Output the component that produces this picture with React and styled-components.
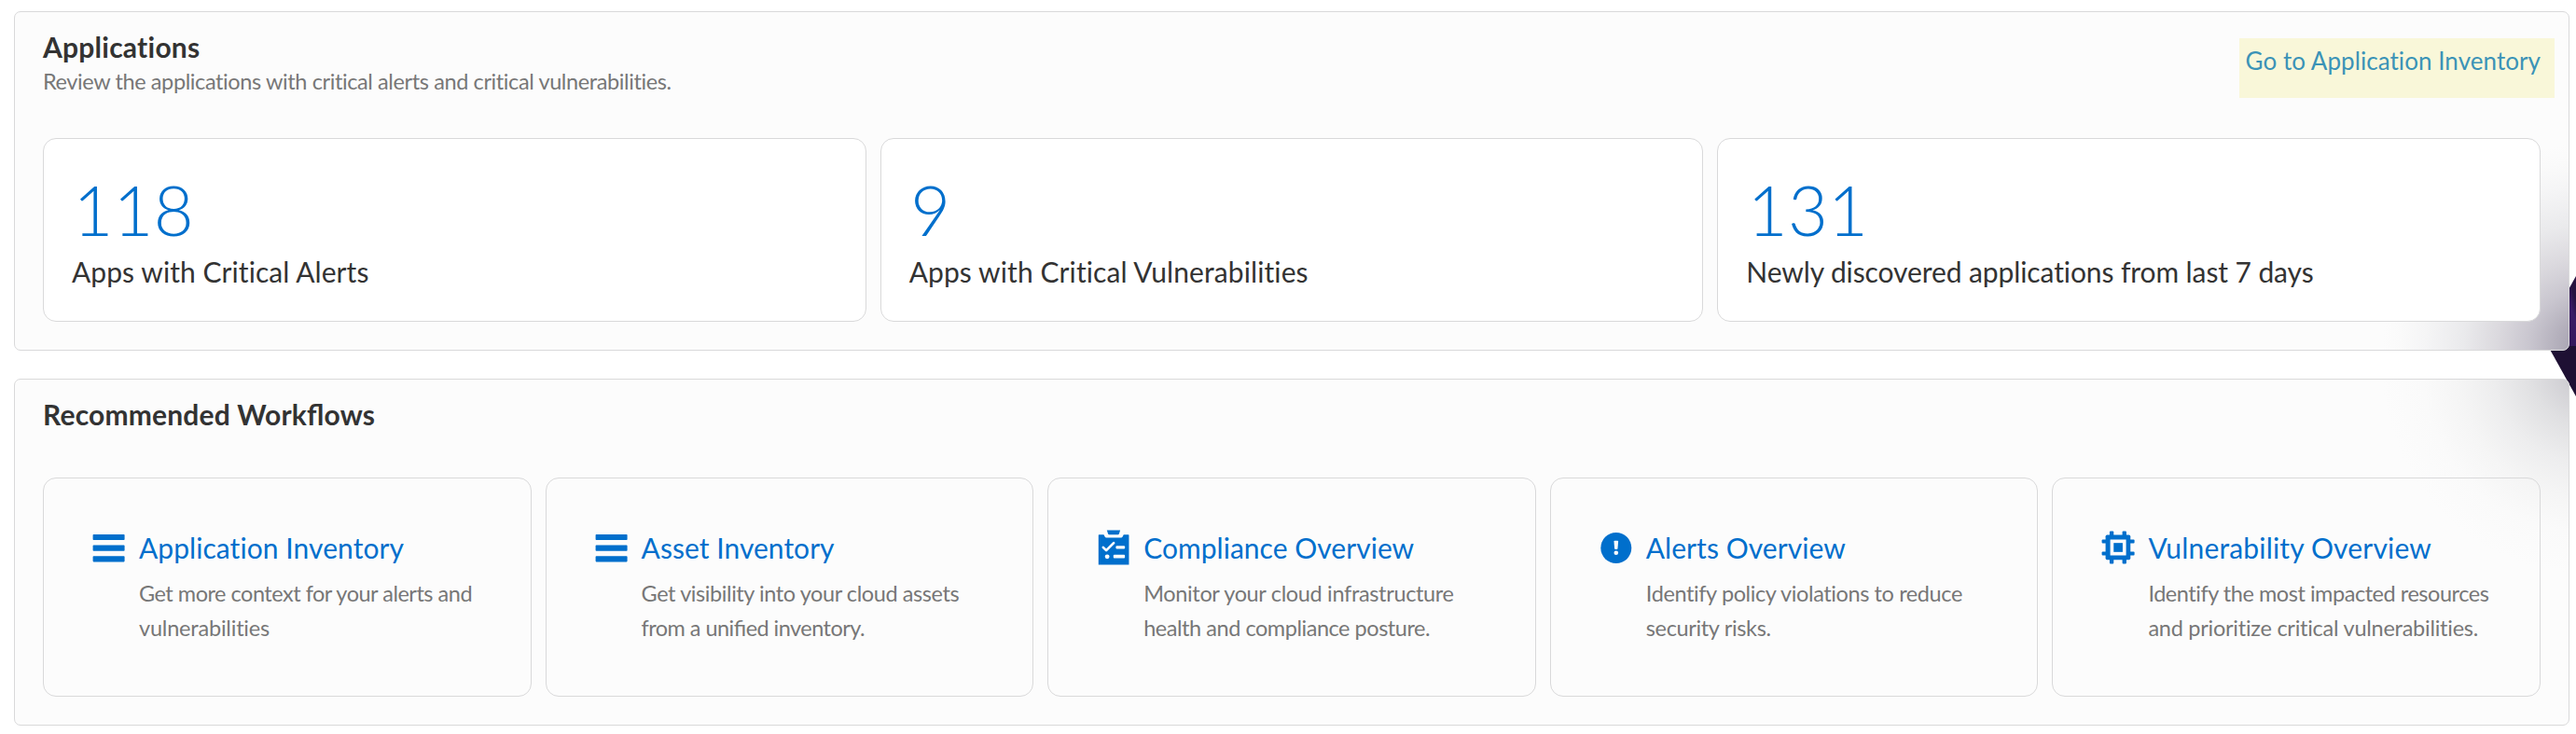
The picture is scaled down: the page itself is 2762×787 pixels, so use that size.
import React from "react";
import styled, { createGlobalStyle } from "styled-components";

const BLUE = "#006fcc";

const GlobalStyle = createGlobalStyle`
  * { box-sizing: border-box; }
  body {
    margin: 0;
    background: #fff;
    color: #333;
    font-family: Lato, "Liberation Sans", sans-serif;
    font-variant-ligatures: none;
  }
`;

const Page = styled.main`
  position: relative;
  display: flex;
  flex-direction: column;
  gap: 30px;
  height: 787px;
  padding: 12px 7px 9px 15px;
  overflow: hidden;
`;

const Gem = styled.svg`
  position: absolute;
  top: 286px;
  right: 0;
  width: 40px;
  height: 150px;
`;

const Panel = styled.section`
  position: relative;
  display: flex;
  flex-direction: column;
  padding: 19px 30px 30px;
  border: 1px solid #d9d9da;
  border-radius: 7px;
  background: ${(p) => p.$glow}, #fcfcfc;
`;

const Header = styled.header`
  display: flex;
  justify-content: space-between;
  align-items: flex-start;
  height: ${(p) => p.$height}px;
`;

const Heading = styled.h2`
  margin: 0;
  font-size: 30px;
  line-height: 36px;
  font-weight: 700;
  letter-spacing: ${(p) => p.$track}px;
  font-feature-settings: "liga" ${(p) => (p.$ligatures ? 1 : 0)};
`;

const Subtitle = styled.p`
  margin: 5px 0 0;
  font-size: 23.5px;
  line-height: 28px;
  letter-spacing: -0.39px;
  color: #777;
`;

const HighlightLink = styled.a`
  height: 64px;
  margin: 9px -15px 0 0;
  padding: 8px 15px 0 6px;
  background: #f9f7d9;
  color: #3b93b7;
  font-size: 26px;
  line-height: 32px;
  letter-spacing: 0.055px;
  white-space: nowrap;
  text-decoration: none;
`;

const Cards = styled.div`
  display: grid;
  grid-template-columns: repeat(${(p) => p.$columns}, minmax(0, 1fr));
  gap: 15px;
`;

const Card = styled.article`
  border: 1px solid #d9d9da;
  border-radius: 14px;
`;

const StatCard = styled(Card)`
  padding: 32px 30px 35px;
  background: #fff;
`;

const StatValue = styled.div`
  padding-left: 1.5px;
  color: ${BLUE};
  font-size: 74px;
  font-weight: 300;
  line-height: 88px;
  letter-spacing: 0.2px;
`;

const StatLabel = styled.div`
  margin-top: 4px;
  font-size: 30px;
  line-height: 36px;
  letter-spacing: ${(p) => p.$track}px;
`;

const WorkflowCard = styled(Card)`
  display: flex;
  gap: 14px;
  height: 235px;
  padding: 54px 30px 0 52px;
`;

const IconSvg = styled.svg`
  flex: none;
  width: 36px;
  height: 40px;
  color: ${BLUE};
`;

const WorkflowText = styled.div`
  flex: 1;
  min-width: 0;
`;

const WorkflowTitle = styled.a`
  display: block;
  color: ${BLUE};
  font-size: 30px;
  line-height: 40px;
  letter-spacing: ${(p) => p.$track}px;
  white-space: nowrap;
`;

const WorkflowCopy = styled.p`
  margin: 11px 0 0;
  color: #777;
  font-size: 23.5px;
  line-height: 37px;
`;

const CopyLine = styled.span`
  display: block;
  white-space: nowrap;
  letter-spacing: ${(p) => p.$track}px;
  font-feature-settings: "liga" ${(p) => (p.$ligatures ? 1 : 0)};
`;

const ListIcon = () => (
  <IconSvg viewBox="0 0 36 40" fill="currentColor">
    <rect x="0.6" y="6" width="34" height="6" rx="0.8" />
    <rect x="0.6" y="17.6" width="34" height="6.2" rx="0.8" />
    <rect x="0.6" y="29.3" width="34" height="6.1" rx="0.8" />
  </IconSvg>
);

const ChecklistIcon = () => (
  <IconSvg viewBox="48.6 22.5 108 120" fill="currentColor">
    <path d="M81 27h43l-4 12q-1 2-3 2H88q-2 0-3-2z" />
    <path d="M54 43q0-2 2-2h15l4 8q1 2 4 2h48q3 0 4-2l4-8h15q2 0 2 2v95H54z" />
    <path d="M69 82l10 10 24-24" fill="none" stroke="#fcfcfc" strokeWidth="8" strokeLinecap="round" strokeLinejoin="round" />
    <rect x="110" y="77" width="29" height="10" rx="3" fill="#fcfcfc" />
    <circle cx="82" cy="112" r="7.3" fill="#fcfcfc" />
    <rect x="102" y="106" width="37" height="11" rx="3" fill="#fcfcfc" />
  </IconSvg>
);

const AlertIcon = () => (
  <IconSvg viewBox="-0.6 0 36 40" fill="currentColor">
    <circle cx="17.2" cy="20.5" r="16.5" />
    <path d="M14.9 13.6q0-.8.8-.8h3q.8 0 .8.8l-.6 7.4q-.1 1-1 1h-1.4q-.9 0-1-1z" fill="#fcfcfc" />
    <circle cx="17.2" cy="25.8" r="2.3" fill="#fcfcfc" />
  </IconSvg>
);

const ChipIcon = () => (
  <IconSvg viewBox="40.2 22.5 108 120" fill="currentColor">
    <rect x="67" y="30" width="13" height="105" rx="3" />
    <rect x="108" y="30" width="13" height="105" rx="3" />
    <rect x="42" y="57" width="105" height="12" rx="3" />
    <rect x="42" y="96" width="105" height="12" rx="3" />
    <rect x="54" y="42" width="80" height="80" rx="5" />
    <rect x="69" y="57" width="51" height="51" fill="#fcfcfc" />
    <rect x="80" y="68" width="29" height="29" />
  </IconSvg>
);

const GLOW_UPPER = `radial-gradient(circle 215px at calc(100% + 16px) calc(100% - 5px),
  #aaa6b4 6%, #b5b1bd 14%, #c9c6cf 27%, #dbd9de 43%, #eaeaec 60%, #f5f5f6 79%, #fafafa 91%, #fcfcfc 100%) no-repeat`;
const GLOW_LOWER = `radial-gradient(circle 220px at calc(100% + 20px) -12px,
  #cdccd1 9%, #e0e0e2 28%, #ededee 46%, #f5f5f5 63%, #fafafa 80%, #fcfcfc 100%) no-repeat`;

const stats = [
  { value: "118", label: "Apps with Critical Alerts", track: 0.07 },
  { value: "9", label: "Apps with Critical Vulnerabilities", track: 0.1 },
  { value: "131", label: "Newly discovered applications from last 7 days", track: -0.1 },
];

const workflows = [
  {
    Icon: ListIcon,
    title: "Application Inventory",
    track: 0.06,
    lines: [
      { text: "Get more context for your alerts and", track: -0.49 },
      { text: "vulnerabilities", track: -0.2 },
    ],
  },
  {
    Icon: ListIcon,
    title: "Asset Inventory",
    track: 0.03,
    lines: [
      { text: "Get visibility into your cloud assets", track: -0.42 },
      { text: "from a unified inventory.", track: -0.54, ligatures: true },
    ],
  },
  {
    Icon: ChecklistIcon,
    title: "Compliance Overview",
    track: 0.03,
    lines: [
      { text: "Monitor your cloud infrastructure", track: -0.34 },
      { text: "health and compliance posture.", track: -0.46 },
    ],
  },
  {
    Icon: AlertIcon,
    title: "Alerts Overview",
    track: 0.05,
    lines: [
      { text: "Identify policy violations to reduce", track: -0.39 },
      { text: "security risks.", track: -0.35 },
    ],
  },
  {
    Icon: ChipIcon,
    title: "Vulnerability Overview",
    track: 0.17,
    lines: [
      { text: "Identify the most impacted resources", track: -0.46 },
      { text: "and prioritize critical vulnerabilities.", track: -0.25 },
    ],
  },
];

export default function App() {
  return (
    <>
      <GlobalStyle />
      <Page>
        <Gem viewBox="0 0 40 150">
          <defs>
            <linearGradient id="gemTop" x1="0" x2="1" y1="1" y2="0.35">
              <stop offset="0" stopColor="#241040" />
              <stop offset="0.85" stopColor="#3a1b66" />
              <stop offset="1" stopColor="#26123f" />
            </linearGradient>
          </defs>
          <path d="M40 10L4 74.5 10 85H40z" fill="url(#gemTop)" />
          <path d="M10 85L40 139V85z" fill="#1e1033" />
        </Gem>
        <Panel $glow={GLOW_UPPER}>
          <Header $height={116}>
            <div>
              <Heading $track={0.24}>Applications</Heading>
              <Subtitle>Review the applications with critical alerts and critical vulnerabilities.</Subtitle>
            </div>
            <HighlightLink>Go to Application Inventory</HighlightLink>
          </Header>
          <Cards $columns={3}>
            {stats.map((s) => (
              <StatCard key={s.label}>
                <StatValue>{s.value}</StatValue>
                <StatLabel $track={s.track}>{s.label}</StatLabel>
              </StatCard>
            ))}
          </Cards>
        </Panel>
        <Panel $glow={GLOW_LOWER}>
          <Header $height={86}>
            <Heading $track={0.17} $ligatures>Recommended Workflows</Heading>
          </Header>
          <Cards $columns={5}>
            {workflows.map(({ Icon, title, track, lines }) => (
              <WorkflowCard key={title}>
                <Icon />
                <WorkflowText>
                  <WorkflowTitle $track={track}>{title}</WorkflowTitle>
                  <WorkflowCopy>
                    {lines.map((l) => (
                      <CopyLine key={l.text} $track={l.track} $ligatures={l.ligatures}>{l.text}</CopyLine>
                    ))}
                  </WorkflowCopy>
                </WorkflowText>
              </WorkflowCard>
            ))}
          </Cards>
        </Panel>
      </Page>
    </>
  );
}
